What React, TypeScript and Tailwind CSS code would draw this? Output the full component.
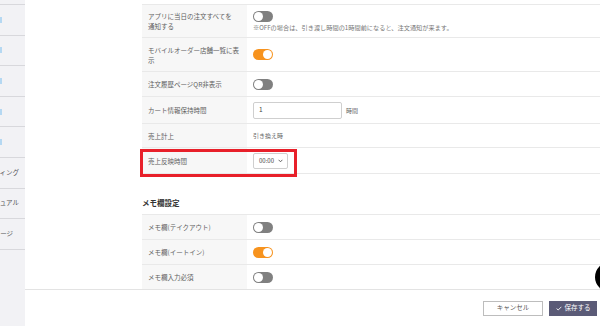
import React from "react";

const font = { fontFamily: '"Noto Sans CJK JP", "Noto Sans", sans-serif' };

function Toggle({ on }: { on?: boolean }) {
  return (
    <div
      className={
        "relative w-[20px] h-[11px] rounded-full shrink-0 " +
        (on ? "bg-[#f7931e]" : "bg-[#808080]")
      }
    >
      <div
        className={
          "absolute top-[1px] w-[9px] h-[9px] rounded-full bg-white " +
          (on ? "right-[1px]" : "left-[1px]")
        }
      />
    </div>
  );
}

function Row({
  h,
  label,
  children,
  top,
}: {
  h: string;
  label: React.ReactNode;
  children?: React.ReactNode;
  top?: boolean;
}) {
  return (
    <div className={"flex border-b border-[#e9e9e9] " + h}>
      <div className="w-[105px] shrink-0 bg-[#f7f7f7] flex items-center pl-[6px] pr-[4px] text-[6.5px] leading-[10px] text-[#5e5e5e]">
        {label}
      </div>
      <div
        className={
          "flex-1 flex pl-[6px] " + (top ? "flex-col justify-start pt-[6px]" : "items-center")
        }
      >
        {children}
      </div>
    </div>
  );
}

export default function App() {
  const sideItems = [
    { t: "", blue: true },
    { t: "", blue: true },
    { t: "", blue: true },
    { t: "", blue: true },
    { t: "", blue: true },
    { t: "ィング", pr: "pr-[6px]" },
    { t: "ュアル", pr: "pr-[6px]" },
    { t: "ージ", pr: "pr-[12px]" },
  ];
  return (
    <div className="relative w-[600px] h-[326px] overflow-hidden bg-white flex" style={font}>
      {/* sidebar */}
      <div className="w-[25px] shrink-0 bg-[#f2f2f5] pt-[4px] overflow-hidden">
        <div className="border-b border-[#d8d8dc]">
          {sideItems.map((it, i) => (
            <div
              key={i}
              className={
                "h-[30.6px] border-t border-[#d8d8dc] flex items-center " +
                (it.blue ? "justify-start" : "justify-end " + it.pr)
              }
            >
              {it.blue ? (
                <div className="w-[2px] h-[6px] bg-[#b5d8f2]" />
              ) : (
                <span className="text-[6.5px] text-[#555] whitespace-nowrap">{it.t}</span>
              )}
            </div>
          ))}
        </div>
      </div>

      {/* main */}
      <div className="flex-1 flex flex-col min-w-0">
        <div className="h-[289px] overflow-hidden pt-[4px] pl-[117px]">
          <div className="border-t border-[#e9e9e9]">
            <Row
              h="h-[33px]"
              top
              label={
                <span>
                  アプリに当日の注文すべてを
                  <br />
                  通知する
                </span>
              }
            >
              <Toggle />
              <div className="mt-[2px] text-[6.2px] leading-[8px] text-[#777] whitespace-nowrap">
                ※OFFの場合は、引き渡し時間の1時間前になると、注文通知が来ます。
              </div>
            </Row>
            <Row
              h="h-[34px]"
              label={
                <span>
                  モバイルオーダー店舗一覧に表
                  <br />
                  示
                </span>
              }
            >
              <Toggle on />
            </Row>
            <Row h="h-[25px]" label="注文履歴ページQR非表示">
              <Toggle />
            </Row>
            <Row h="h-[27px]" label="カート情報保持時間">
              <div className="w-[89px] h-[17px] border border-[#cfcfcf] rounded-[2px] flex items-center pl-[5px] text-[6.5px] text-[#444]">
                1
              </div>
              <span className="ml-[4px] text-[6px] text-[#666]">時間</span>
            </Row>
            <Row h="h-[24px]" label="売上計上">
              <span className="text-[6px] text-[#666]">引き換え時</span>
            </Row>
            <div className="relative">
              <Row h="h-[26px]" label="売上反映時間">
                <div className="w-[35px] h-[16px] border border-[#cfcfcf] rounded-[2px] flex items-center justify-between pl-[5px] pr-[4px] text-[6px] text-[#444]">
                  <span>00:00</span>
                  <svg width="5" height="4" viewBox="0 0 5 4">
                    <path d="M0.6 0.8 L2.5 2.8 L4.4 0.8" fill="none" stroke="#555" strokeWidth="0.9" />
                  </svg>
                </div>
              </Row>
              <div className="absolute left-[-2px] top-[1px] w-[157px] h-[28px] border-[3px] border-[#e8202a]" />
            </div>
          </div>

          <div className="mt-[24px] h-[16px] text-[7.5px] font-bold text-[#333] leading-[10px]">
            メモ欄設定
          </div>

          <div className="border-t border-[#e9e9e9]">
            <Row h="h-[25px]" label="メモ欄(テイクアウト)">
              <Toggle />
            </Row>
            <Row h="h-[25px]" label="メモ欄(イートイン)">
              <Toggle on />
            </Row>
            <Row h="h-[25px]" label="メモ欄入力必須">
              <Toggle />
            </Row>
          </div>
        </div>

        {/* footer */}
        <div className="flex-1 border-t border-[#e3e3e3] flex items-center justify-end pr-[3px] gap-[6px]">
          <button className="w-[60px] h-[15px] border border-[#bdbdbd] bg-white text-[6.5px] text-[#555] flex items-center justify-center">
            キャンセル
          </button>
          <button className="w-[48px] h-[15px] bg-[#5b5b77] text-white text-[6.5px] flex items-center justify-center gap-[3px]">
            <svg width="6" height="5" viewBox="0 0 6 5">
              <path d="M0.6 2.6 L2.2 4 L5.4 0.8" fill="none" stroke="#fff" strokeWidth="0.9" />
            </svg>
            保存する
          </button>
        </div>
      </div>

      {/* chat bubble */}
      <div className="absolute left-[595px] top-[262px] w-[30px] h-[30px] rounded-full bg-black" />
    </div>
  );
}
